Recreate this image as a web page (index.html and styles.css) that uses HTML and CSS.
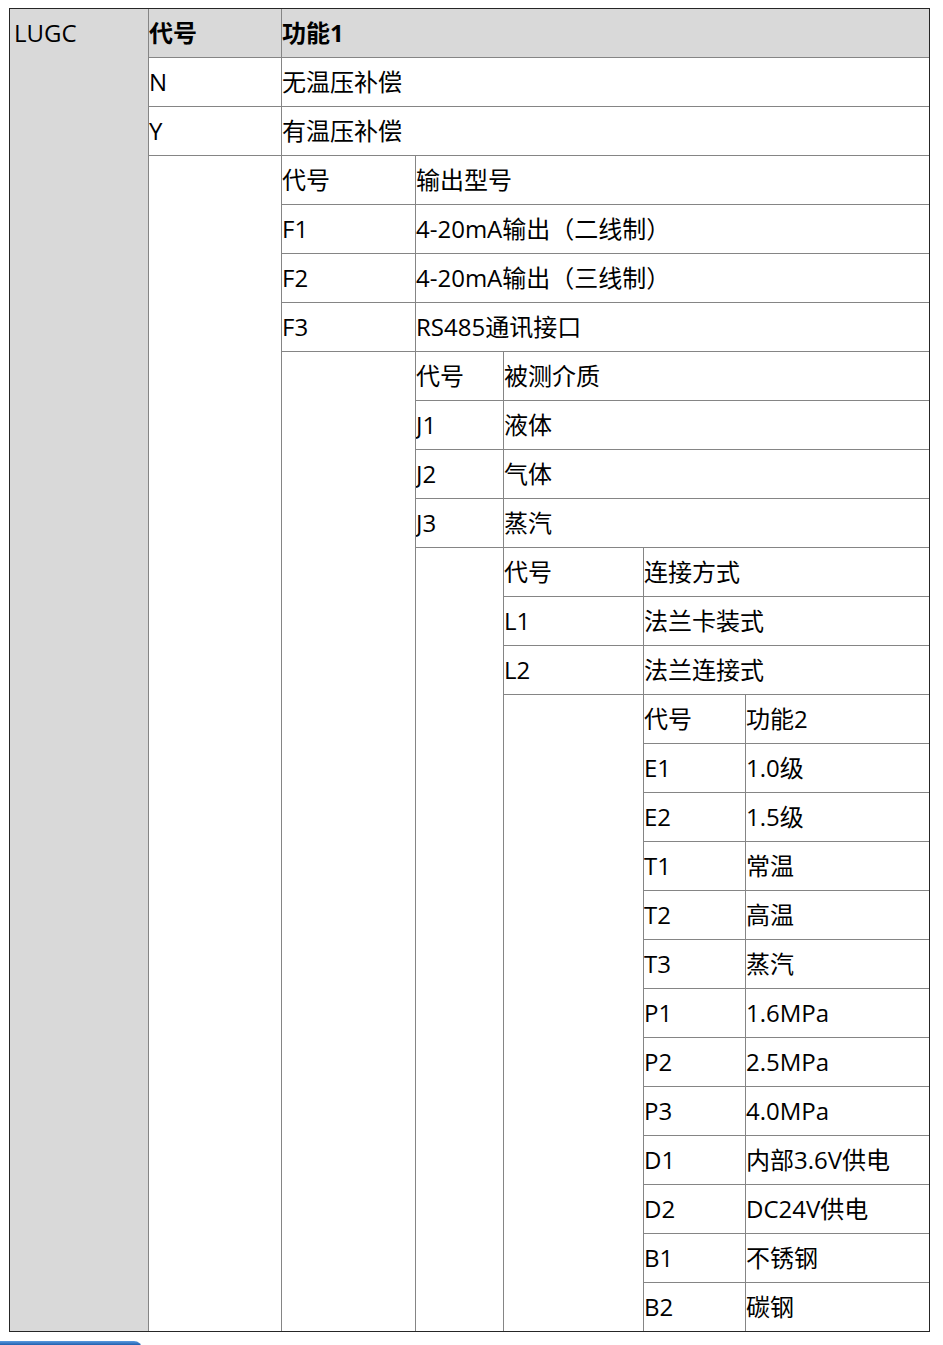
FILE: index.html
```html
<!DOCTYPE html>
<html lang="zh-CN">
<head>
<meta charset="utf-8">
<title>LUGC 选型表</title>
<link rel="stylesheet" href="styles.css">
</head>
<body>
<div class="frame">
<table class="spec">
<colgroup>
<col class="c1"><col class="c2"><col class="c3"><col class="c4"><col class="c5"><col class="c6"><col class="c7">
</colgroup>
<tbody>
<tr class="first">
<td class="model" rowspan="27">LUGC</td>
<td class="head">代号</td>
<td class="head" colspan="5">功能1</td>
</tr>
<tr><td>N</td><td colspan="5">无温压补偿</td></tr>
<tr><td>Y</td><td colspan="5">有温压补偿</td></tr>
<tr><td class="blank" rowspan="24"></td><td>代号</td><td colspan="4">输出型号</td></tr>
<tr><td>F1</td><td colspan="4">4-20mA输出（二线制）</td></tr>
<tr><td>F2</td><td colspan="4">4-20mA输出（三线制）</td></tr>
<tr><td>F3</td><td colspan="4">RS485通讯接口</td></tr>
<tr><td class="blank" rowspan="20"></td><td>代号</td><td colspan="3">被测介质</td></tr>
<tr><td>J1</td><td colspan="3">液体</td></tr>
<tr><td>J2</td><td colspan="3">气体</td></tr>
<tr><td>J3</td><td colspan="3">蒸汽</td></tr>
<tr><td class="blank" rowspan="16"></td><td>代号</td><td colspan="2">连接方式</td></tr>
<tr><td>L1</td><td colspan="2">法兰卡装式</td></tr>
<tr><td>L2</td><td colspan="2">法兰连接式</td></tr>
<tr><td class="blank" rowspan="13"></td><td>代号</td><td>功能2</td></tr>
<tr><td>E1</td><td>1.0级</td></tr>
<tr><td>E2</td><td>1.5级</td></tr>
<tr><td>T1</td><td>常温</td></tr>
<tr><td>T2</td><td>高温</td></tr>
<tr><td>T3</td><td>蒸汽</td></tr>
<tr><td>P1</td><td>1.6MPa</td></tr>
<tr><td>P2</td><td>2.5MPa</td></tr>
<tr><td>P3</td><td>4.0MPa</td></tr>
<tr><td>D1</td><td>内部3.6V供电</td></tr>
<tr><td>D2</td><td>DC24V供电</td></tr>
<tr><td>B1</td><td>不锈钢</td></tr>
<tr><td>B2</td><td>碳钢</td></tr>
</tbody>
</table>
</div>
<div class="bar"></div>
</body>
</html>
```

FILE: styles.css
```css
html, body {
  margin: 0;
  padding: 0;
  background: #ffffff;
}
body {
  padding: 8px 0 0 9px;
  font-family: "Open Sans", "Noto Sans CJK SC", sans-serif;
  font-size: 24px;
  color: #000000;
}
.frame {
  width: 919px;
  border: 1px solid #262626;
}
.spec {
  width: 919px;
  table-layout: fixed;
  border-collapse: separate;
  border-spacing: 0;
}
.c1 { width: 138px; }
.c2 { width: 133px; }
.c3 { width: 134px; }
.c4 { width: 88px; }
.c5 { width: 140px; }
.c6 { width: 102px; }
.c7 { width: 184px; }
.spec td {
  height: 48px;
  padding: 0;
  border-left: 1px solid #858585;
  border-top: 1px solid #858585;
  vertical-align: middle;
  text-align: left;
  line-height: 32px;
  white-space: nowrap;
  overflow: hidden;
}
.spec tr.first td {
  border-top: none;
}
.spec td.model {
  border-left: none;
  border-top: none;
  background: #d9d9d9;
  vertical-align: top;
  padding: 8px 0 0 4px;
}
.spec td.head {
  background: #d9d9d9;
  font-weight: 700;
}
.bar {
  margin-top: 9px;
  margin-left: -9px;
  width: 142px;
  height: 10px;
  border-radius: 0 8px 0 0;
  background: linear-gradient(#5b9be0, #1f5fae 40%, #1a56a0);
}
```
